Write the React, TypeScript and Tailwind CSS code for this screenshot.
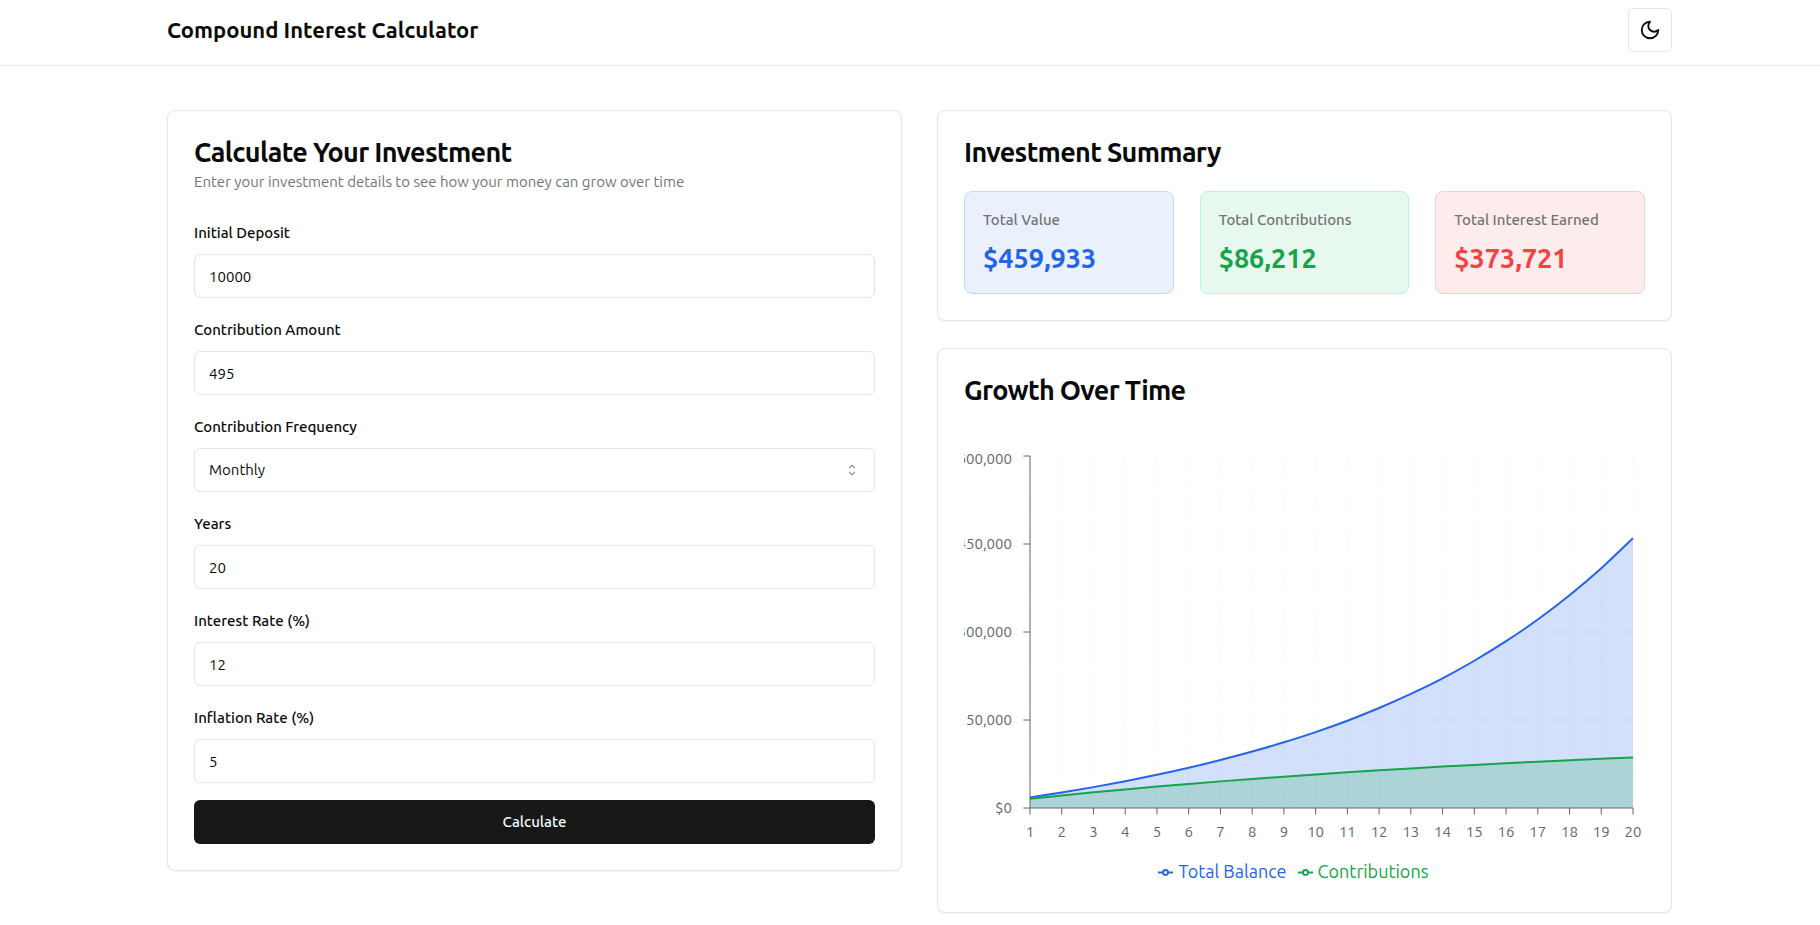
import { useEffect, useRef, useState } from "react";
import type { ReactNode } from "react";
import { RxCaretSort } from "react-icons/rx";

const BALANCE = [
  18000, 26500, 35600, 45600, 56600, 68500, 81800, 96200, 112000, 129400, 148800, 170500, 194500, 221000, 251000,
  284300, 321200, 362500, 408700, 459933,
];

const CONTRIBUTIONS = BALANCE.map((_, i) => 10000 + (76212 * (1 - 1.05 ** -(i + 1))) / (1 - 1.05 ** -20));

const Y_MAX = 600000;
const Y_TICKS = [0, 150000, 300000, 450000, 600000];

type Point = [number, number];

/** Smooth cubic path through the points. */
function curve(points: Point[]): string {
  let d = `M${points[0][0]},${points[0][1]}`;
  for (let i = 0; i < points.length - 1; i++) {
    const p0 = points[Math.max(i - 1, 0)];
    const p1 = points[i];
    const p2 = points[i + 1];
    const p3 = points[Math.min(i + 2, points.length - 1)];
    d += `C${p1[0] + (p2[0] - p0[0]) / 6},${p1[1] + (p2[1] - p0[1]) / 6} ${p2[0] - (p3[0] - p1[0]) / 6},${
      p2[1] - (p3[1] - p1[1]) / 6
    } ${p2[0]},${p2[1]}`;
  }
  return d;
}

function Card({ title, description, children }: { title: string; description?: string; children: ReactNode }) {
  return (
    <section className="rounded-lg border border-[#e5e5e5] bg-white p-[26px] shadow-xs">
      <h2 className="text-[27px] leading-[30px] font-bold tracking-tight">{title}</h2>
      {description && <p className="mt-1 text-[15px] leading-[22px] text-[#737373]">{description}</p>}
      {children}
    </section>
  );
}

const CONTROL =
  "h-11 w-full rounded-md border border-[#e5e5e5] bg-transparent px-[14px] text-[15px] outline-none focus:ring-1 focus:ring-neutral-900";

function Field({ id, label, children }: { id: string; label: string; children: ReactNode }) {
  return (
    <div>
      <label htmlFor={id} className="mb-[7px] block pt-px text-[15px] leading-7 font-medium">
        {label}
      </label>
      {children}
    </div>
  );
}

function TextField({ id, label, value }: { id: string; label: string; value: string }) {
  return (
    <Field id={id} label={label}>
      <input id={id} type="text" inputMode="decimal" defaultValue={value} className={CONTROL} />
    </Field>
  );
}

function Stat({ label, value, box, text }: { label: string; value: string; box: string; text: string }) {
  return (
    <div className={`rounded-lg border px-[18px] py-[17px] ${box}`}>
      <h3 className="text-[15px] leading-[22px] font-medium whitespace-nowrap text-[#737373]">{label}</h3>
      <p className={`mt-[9px] text-[27px] leading-9 font-bold ${text}`}>{value}</p>
    </div>
  );
}

function LegendItem({ color, label }: { color: string; label: string }) {
  return (
    <li className="flex items-center gap-[5px]" style={{ color }}>
      <svg width="15" height="15" viewBox="0 0 32 32" fill="none" stroke="currentColor" strokeWidth="4" aria-hidden="true">
        <path d="M0,18h10.667A5.333,5.333,0,1,1,21.333,18H32M21.333,18A5.333,5.333,0,1,1,10.667,18" />
      </svg>
      {label}
    </li>
  );
}

function GrowthChart() {
  const ref = useRef<HTMLDivElement>(null);
  const [width, setWidth] = useState(681);

  useEffect(() => {
    const node = ref.current;
    if (!node) return;
    const observer = new ResizeObserver(([entry]) => setWidth(Math.round(entry.contentRect.width)));
    observer.observe(node);
    return () => observer.disconnect();
  }, []);

  const left = 66;
  const right = width - 12;
  const top = 11;
  const bottom = 363;
  const x = (i: number) => left + ((right - left) * i) / (BALANCE.length - 1);
  const y = (v: number) => bottom - ((bottom - top) * v) / Y_MAX;
  const series = [
    { data: BALANCE, color: "#2563eb" },
    { data: CONTRIBUTIONS, color: "#16a34a" },
  ];

  return (
    <div ref={ref} className="mt-10 h-[441px] min-w-0">
      <svg width={width} height="413" className="block overflow-hidden" role="img" aria-label="Growth over time">
        <g stroke="#f5f5f5" strokeDasharray="3.3 3.3">
          {Y_TICKS.map((t) => (
            <line key={t} x1={left} x2={right} y1={y(t)} y2={y(t)} />
          ))}
          {BALANCE.map((_, i) => (
            <line key={i} x1={x(i)} x2={x(i)} y1={top} y2={bottom} />
          ))}
        </g>
        <g stroke="#666666">
          <line x1={left} x2={right} y1={bottom} y2={bottom} />
          {BALANCE.map((_, i) => (
            <line key={i} x1={x(i)} x2={x(i)} y1={bottom} y2={bottom + 6.6} />
          ))}
          <line x1={left} x2={left} y1={top} y2={bottom} />
          {Y_TICKS.map((t) => (
            <line key={t} x1={left - 6.6} x2={left} y1={y(t)} y2={y(t)} />
          ))}
        </g>
        <g fill="#666666" fontSize="15">
          {BALANCE.map((_, i) => (
            <text key={i} x={x(i)} y={bottom + 29} textAnchor="middle">
              {i + 1}
            </text>
          ))}
          {Y_TICKS.map((t) => (
            <text key={t} x={left - 18} y={Math.max(y(t) + 5, top + 8)} textAnchor="end">
              ${t.toLocaleString("en-US")}
            </text>
          ))}
        </g>
        {series.map(({ data, color }) => {
          const line = curve(data.map((v, i): Point => [x(i), y(v)]));
          return (
            <g key={color}>
              <path d={`${line}L${right},${bottom}L${left},${bottom}Z`} fill={color} fillOpacity="0.2" />
              <path d={line} fill="none" stroke={color} strokeWidth="2" />
            </g>
          );
        })}
      </svg>
      <ul className="flex justify-center gap-[11px] pr-[22px] text-[18px] leading-[26px]">
        <LegendItem color="#2563eb" label="Total Balance" />
        <LegendItem color="#16a34a" label="Contributions" />
      </ul>
    </div>
  );
}

export default function App() {
  return (
    <div className="min-h-screen bg-white font-['Ubuntu','Noto_Sans',sans-serif] text-[#0a0a0a]">
      <header className="border-b border-[#e5e5e5] pt-2 pb-[13px] pl-[19px]">
        <div className="mx-auto flex max-w-[1505px] items-center justify-between">
          <h1 className="text-[22px] leading-8 font-bold">Compound Interest Calculator</h1>
          <button
            type="button"
            aria-label="Toggle theme"
            className="flex size-11 items-center justify-center rounded-md border border-[#e5e5e5] hover:bg-neutral-100"
          >
            <svg
              width="22"
              height="22"
              viewBox="0 0 24 24"
              fill="none"
              stroke="currentColor"
              strokeWidth="2"
              strokeLinecap="round"
              strokeLinejoin="round"
              aria-hidden="true"
            >
              <path d="M12 3a6 6 0 0 0 9 9 9 9 0 1 1-9-9Z" />
            </svg>
          </button>
        </div>
      </header>
      <main className="pt-11 pb-3 pl-[19px]">
        <div className="mx-auto grid max-w-[1505px] grid-cols-1 items-start gap-[35px] lg:grid-cols-2">
          <Card
            title="Calculate Your Investment"
            description="Enter your investment details to see how your money can grow over time"
          >
            <form className="mt-[25px] flex flex-col gap-[17px]" onSubmit={(e) => e.preventDefault()}>
              <TextField id="deposit" label="Initial Deposit" value="10000" />
              <TextField id="contribution" label="Contribution Amount" value="495" />
              <Field id="frequency" label="Contribution Frequency">
                <div className="relative">
                  <select id="frequency" defaultValue="Monthly" className={`${CONTROL} appearance-none`}>
                    <option>Monthly</option>
                    <option>Yearly</option>
                  </select>
                  <RxCaretSort className="pointer-events-none absolute inset-y-0 right-[14px] my-auto size-[18px] opacity-50" />
                </div>
              </Field>
              <TextField id="years" label="Years" value="20" />
              <TextField id="interest" label="Interest Rate (%)" value="12" />
              <TextField id="inflation" label="Inflation Rate (%)" value="5" />
              <button
                type="submit"
                className="h-11 rounded-md bg-[#171717] text-[15px] font-medium text-[#fafafa] hover:bg-neutral-800"
              >
                Calculate
              </button>
            </form>
          </Card>
          <div className="flex min-w-0 flex-col gap-[27px]">
            <Card title="Investment Summary">
              <div className="mt-6 grid grid-cols-1 gap-[26px] md:grid-cols-3">
                <Stat label="Total Value" value="$459,933" box="border-[#bfdbfe] bg-[#eaf1fd]" text="text-[#2563eb]" />
                <Stat
                  label="Total Contributions"
                  value="$86,212"
                  box="border-[#bbf7d0] bg-[#e7f8ef]"
                  text="text-[#16a34a]"
                />
                <Stat
                  label="Total Interest Earned"
                  value="$373,721"
                  box="border-[#fecaca] bg-[#fdecec]"
                  text="text-[#ef4444]"
                />
              </div>
            </Card>
            <Card title="Growth Over Time">
              <GrowthChart />
            </Card>
          </div>
        </div>
      </main>
    </div>
  );
}
